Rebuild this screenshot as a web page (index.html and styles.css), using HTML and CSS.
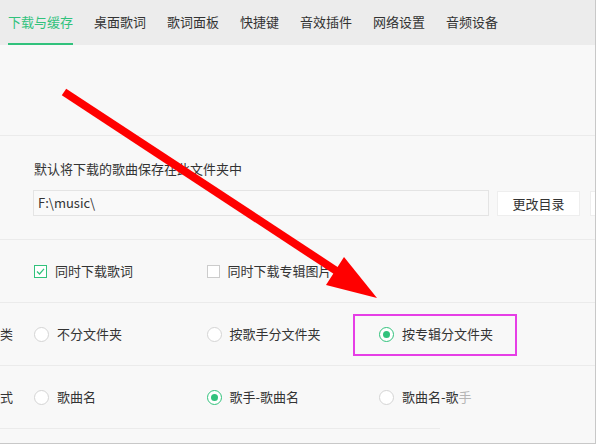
FILE: index.html
```html
<!DOCTYPE html>
<html lang="zh-CN">
<head>
<meta charset="utf-8">
<title>设置</title>
<link rel="stylesheet" href="styles.css">
</head>
<body>
<div class="window">
  <nav class="tabs">
    <span class="tab active">下载与缓存</span>
    <span class="tab">桌面歌词</span>
    <span class="tab">歌词面板</span>
    <span class="tab">快捷键</span>
    <span class="tab">音效插件</span>
    <span class="tab">网络设置</span>
    <span class="tab">音频设备</span>
  </nav>

  <div class="section blank"></div>

  <div class="section path">
    <p class="hint">默认将下载的歌曲保存在此文件夹中</p>
    <div class="path-row">
      <div class="input">F:\music\</div>
      <button class="btn">更改目录</button>
      <button class="btn">打开目录</button>
    </div>
  </div>

  <div class="row">
    <div class="label"></div>
    <div class="opt">
      <span class="check on"><svg viewBox="0 0 13 13" width="13" height="13"><polyline points="3,6.5 5.5,9 10,3.8" fill="none" stroke="#31c27c" stroke-width="1.2"/></svg></span>
      <span>同时下载歌词</span>
    </div>
    <div class="opt">
      <span class="check"></span>
      <span>同时下载专辑图片</span>
    </div>
  </div>

  <div class="row">
    <div class="label"><span>文件分类</span></div>
    <div class="opt"><span class="radio"></span><span>不分文件夹</span></div>
    <div class="opt"><span class="radio"></span><span>按歌手分文件夹</span></div>
    <div class="opt"><span class="radio on"></span><span>按专辑分文件夹</span><span class="highlight"></span></div>
  </div>

  <div class="row last">
    <div class="label"><span>文件命名方式</span></div>
    <div class="opt"><span class="radio"></span><span>歌曲名</span></div>
    <div class="opt"><span class="radio on"></span><span>歌手-歌曲名</span></div>
    <div class="opt"><span class="radio"></span><span>歌曲名-歌<span class="fade">手</span></span></div>
  </div>
  <div class="rule"></div>
</div>

<svg class="arrow" viewBox="0 0 600 448" width="600" height="448">
  <line x1="64" y1="92" x2="338" y2="272" stroke="#ff0000" stroke-width="8"/>
  <polygon points="344,257 326,285 377,298" fill="#ff0000"/>
</svg>
</body>
</html>
```

FILE: styles.css
```css
* { box-sizing: border-box; }

html, body {
  margin: 0;
  padding: 0;
  background: #ffffff;
}

body {
  width: 600px;
  height: 448px;
  position: relative;
  overflow: hidden;
  font-family: "Noto Sans CJK SC", "Noto Sans", sans-serif;
  font-size: 13px;
  color: #333333;
}

.window {
  width: 596px;
  height: 444px;
  background: #f8f8f8;
  border-right: 1px solid #c8c8c8;
  border-bottom: 1px solid #c8c8c8;
  overflow: hidden;
}

.tabs {
  display: flex;
  gap: 21px;
  height: 45px;
  padding-left: 8px;
  background: #ececec;
}

.tab {
  display: flex;
  align-items: center;
  height: 45px;
  line-height: 18px;
  border-bottom: 2px solid transparent;
  color: #333333;
  white-space: nowrap;
}

.tab.active {
  color: #31c27c;
  border-bottom-color: #31c27c;
}

.section {
  border-bottom: 1px solid #ebebeb;
}

.blank {
  height: 91px;
}

.path {
  height: 104px;
  padding: 24px 0 0 33px;
}

.hint {
  margin: 0 0 12px 1px;
  line-height: 18px;
}

.path-row {
  display: flex;
  gap: 8px;
  white-space: nowrap;
}

.input {
  flex: 0 0 456px;
  height: 26px;
  padding-left: 4px;
  line-height: 24px;
  background: #f9f9f9;
  border: 1px solid #e4e4e4;
}

.btn {
  flex: 0 0 83px;
  height: 25px;
  margin-top: 1px;
  padding: 0;
  font: inherit;
  color: #333333;
  background: #ffffff;
  border: 1px solid #eeeeee;
}

.btn + .btn {
  margin-left: 2px;
}

.row {
  display: flex;
  align-items: center;
  height: 63px;
  border-bottom: 1px solid #ebebeb;
}

.row.last {
  height: 62px;
  border-bottom: none;
}

.rule {
  width: 440px;
  height: 1px;
  background: #ebebeb;
}

.label {
  flex: 0 0 13px;
  margin-right: 21px;
  display: flex;
  justify-content: flex-end;
  overflow: hidden;
  white-space: nowrap;
  line-height: 18px;
}

.opt {
  position: relative;
  flex: 0 0 172.5px;
  display: flex;
  align-items: center;
  gap: 8px;
  line-height: 18px;
  white-space: nowrap;
}

.check {
  flex: 0 0 13px;
  width: 13px;
  height: 13px;
  border: 1px solid #cccccc;
  background: #ffffff;
  position: relative;
}

.check.on {
  border-color: #31c27c;
}

.check svg {
  position: absolute;
  left: -1px;
  top: -1px;
}

.radio {
  flex: 0 0 15px;
  width: 15px;
  height: 15px;
  border-radius: 50%;
  border: 1px solid #d4d4d4;
  background: #ffffff;
  position: relative;
}

.radio.on {
  border-color: #31c27c;
}

.radio.on::after {
  content: "";
  position: absolute;
  left: 3px;
  top: 3px;
  width: 7px;
  height: 7px;
  border-radius: 50%;
  background: #31c27c;
}

.fade {
  color: #b5b5b5;
}

.highlight {
  position: absolute;
  left: -26px;
  top: -11px;
  width: 164px;
  height: 42px;
  border: 2px solid #e63ee6;
}

.arrow {
  position: absolute;
  left: 0;
  top: 0;
  pointer-events: none;
}
```
